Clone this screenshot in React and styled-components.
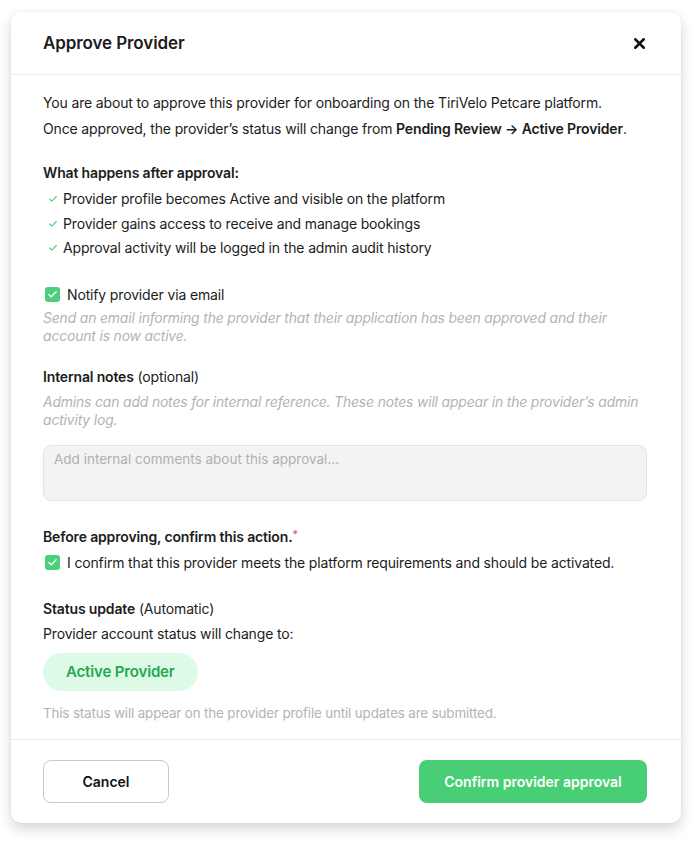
import React from 'react'
import styled, { createGlobalStyle } from 'styled-components'
import { X, Check } from 'lucide-react'

const GlobalStyle = createGlobalStyle`
    body {
        margin: 0;
        background: #ffffff;
        font-family: 'Inter', 'Noto Sans', sans-serif;
        color: #1c1c1c;
    }
`

const benefits = [
    'Provider profile becomes Active and visible on the platform',
    'Provider gains access to receive and manage bookings',
    'Approval activity will be logged in the admin audit history',
]

const App = () => {
    return (
        <Page>
            <GlobalStyle />
            <Modal>
                <Header>
                    <Title>Approve Provider</Title>
                    <CloseButton aria-label="Close">
                        <X size={17} strokeWidth={3.6} />
                    </CloseButton>
                </Header>

                <Body>
                    <Intro>
                        You are about to approve this provider for onboarding on the TiriVelo Petcare platform.
                        <br />
                        Once approved, the provider’s status will change from <strong>Pending Review → Active Provider</strong>.
                    </Intro>

                    <Heading $top={19}>What happens after approval:</Heading>
                    <List>
                        {benefits.map((b) => (
                            <li key={b}>
                                <Check size={10} strokeWidth={2.6} color="#4ccf7a" />
                                {b}
                            </li>
                        ))}
                    </List>

                    <CheckRow $top={23}>
                        <Box><Check size={11} strokeWidth={2.6} color="#fff" /></Box>
                        Notify provider via email
                    </CheckRow>
                    <Hint $italic $top={3}>
                        Send an email informing the provider that their application has been approved and their account is now active.
                    </Hint>

                    <Label $top={21}>
                        <b>Internal notes</b> (optional)
                    </Label>
                    <Hint $italic $top={5}>
                        Admins can add notes for internal reference. These notes will appear in the provider’s admin activity log.
                    </Hint>
                    <Notes placeholder="Add internal comments about this approval..." />

                    <Label $top={25}>
                        <b>Before approving, confirm this action.</b><Req>*</Req>
                    </Label>
                    <CheckRow $top={4}>
                        <Box><Check size={11} strokeWidth={2.6} color="#fff" /></Box>
                        I confirm that this provider meets the platform requirements and should be activated.
                    </CheckRow>

                    <Label $top={24}>
                        <b>Status update</b> (Automatic)
                    </Label>
                    <Label $top={3}>Provider account status will change to:</Label>
                    <Pill>Active Provider</Pill>
                    <Hint $top={13}>This status will appear on the provider profile until updates are submitted.</Hint>
                </Body>

                <Footer>
                    <Button>Cancel</Button>
                    <Button $primary>Confirm provider approval</Button>
                </Footer>
            </Modal>
        </Page>
    )
}

const Page = styled.div`
    padding: 12px 17px 20px 11px;
`

const Modal = styled.div`
    width: 670px;
    background: #fff;
    border-radius: 10px;
    box-shadow: 0 6px 14px rgba(0, 0, 0, 0.16), 0 0 3px rgba(0, 0, 0, 0.06);
    overflow: hidden;
`

const Header = styled.div`
    height: 62px;
    display: flex;
    align-items: center;
    justify-content: space-between;
    padding: 0 33px 0 32px;
    border-bottom: 1.5px solid #ececef;
`

const Title = styled.h2`
    margin: 0;
    font-size: 17px;
    font-weight: 600;
    letter-spacing: -0.1px;
`

const CloseButton = styled.button`
    border: 0;
    background: none;
    padding: 0;
    display: flex;
    color: #111;
    cursor: pointer;
`

const Body = styled.div`
    padding: 15px 34px 17px 32px;
    font-size: 14px;
    letter-spacing: -0.15px;
`

const Intro = styled.p`
    margin: 0;
    line-height: 26px;

    strong {
        font-weight: 600;
    }
`

const Heading = styled.div`
    margin-top: ${(p) => p.$top || 0}px;
    line-height: 24px;
    font-weight: 600;
    margin-bottom: 2px;
`

const List = styled.ul`
    list-style: none;
    margin: 0;
    padding: 0;

    li {
        display: flex;
        align-items: center;
        gap: 5px;
        line-height: 24.5px;
        padding-left: 5px;
    }
`

const CheckRow = styled.label`
    display: flex;
    align-items: center;
    gap: 7px;
    margin-top: ${(p) => p.$top || 0}px;
    line-height: 22px;
    padding-left: 2px;
`

const Box = styled.span`
    width: 15px;
    height: 15px;
    border-radius: 3px;
    background: #4ccf7a;
    display: flex;
    align-items: center;
    justify-content: center;
`

const Hint = styled.p`
    margin: ${(p) => p.$top || 0}px 0 0;
    font-size: ${(p) => (p.$italic ? '13.9px' : '13.4px')};
    line-height: 18px;
    color: #b3b3b3;
    font-style: ${(p) => (p.$italic ? 'italic' : 'normal')};
`

const Label = styled.div`
    margin-top: ${(p) => p.$top || 0}px;
    line-height: 22px;

    b {
        font-weight: 600;
    }
`

const Req = styled.sup`
    color: #ef4c4c;
    font-size: 11px;
    vertical-align: 4px;
    line-height: 0;
`

const Notes = styled.textarea`
    display: block;
    box-sizing: border-box;
    width: 100%;
    height: 56px;
    margin-top: 16px;
    padding: 5px 10px;
    border: 1px solid #e3e3e3;
    border-radius: 8px;
    background: #f3f3f3;
    resize: none;
    font-family: inherit;
    font-size: 13.5px;
    color: #1c1c1c;

    &::placeholder {
        color: #b0b0b0;
    }
`

const Pill = styled.div`
    display: inline-flex;
    align-items: center;
    margin-top: 8px;
    height: 38px;
    padding: 0 23px;
    border-radius: 19px;
    background: #dcfae6;
    color: #25a84f;
    font-weight: 600;
    font-size: 15px;
`

const Footer = styled.div`
    display: flex;
    justify-content: space-between;
    padding: 20px 34px 20px 32px;
    border-top: 1.5px solid #ececef;
`

const Button = styled.button`
    height: 43px;
    width: ${(p) => (p.$primary ? '228px' : '126px')};
    border-radius: 8px;
    border: ${(p) => (p.$primary ? '0' : '1.5px solid #c9c9c9')};
    background: ${(p) => (p.$primary ? '#48cf75' : '#fff')};
    color: ${(p) => (p.$primary ? '#fff' : '#111')};
    font-family: inherit;
    font-size: 14px;
    font-weight: 600;
    cursor: pointer;
`

export default App
